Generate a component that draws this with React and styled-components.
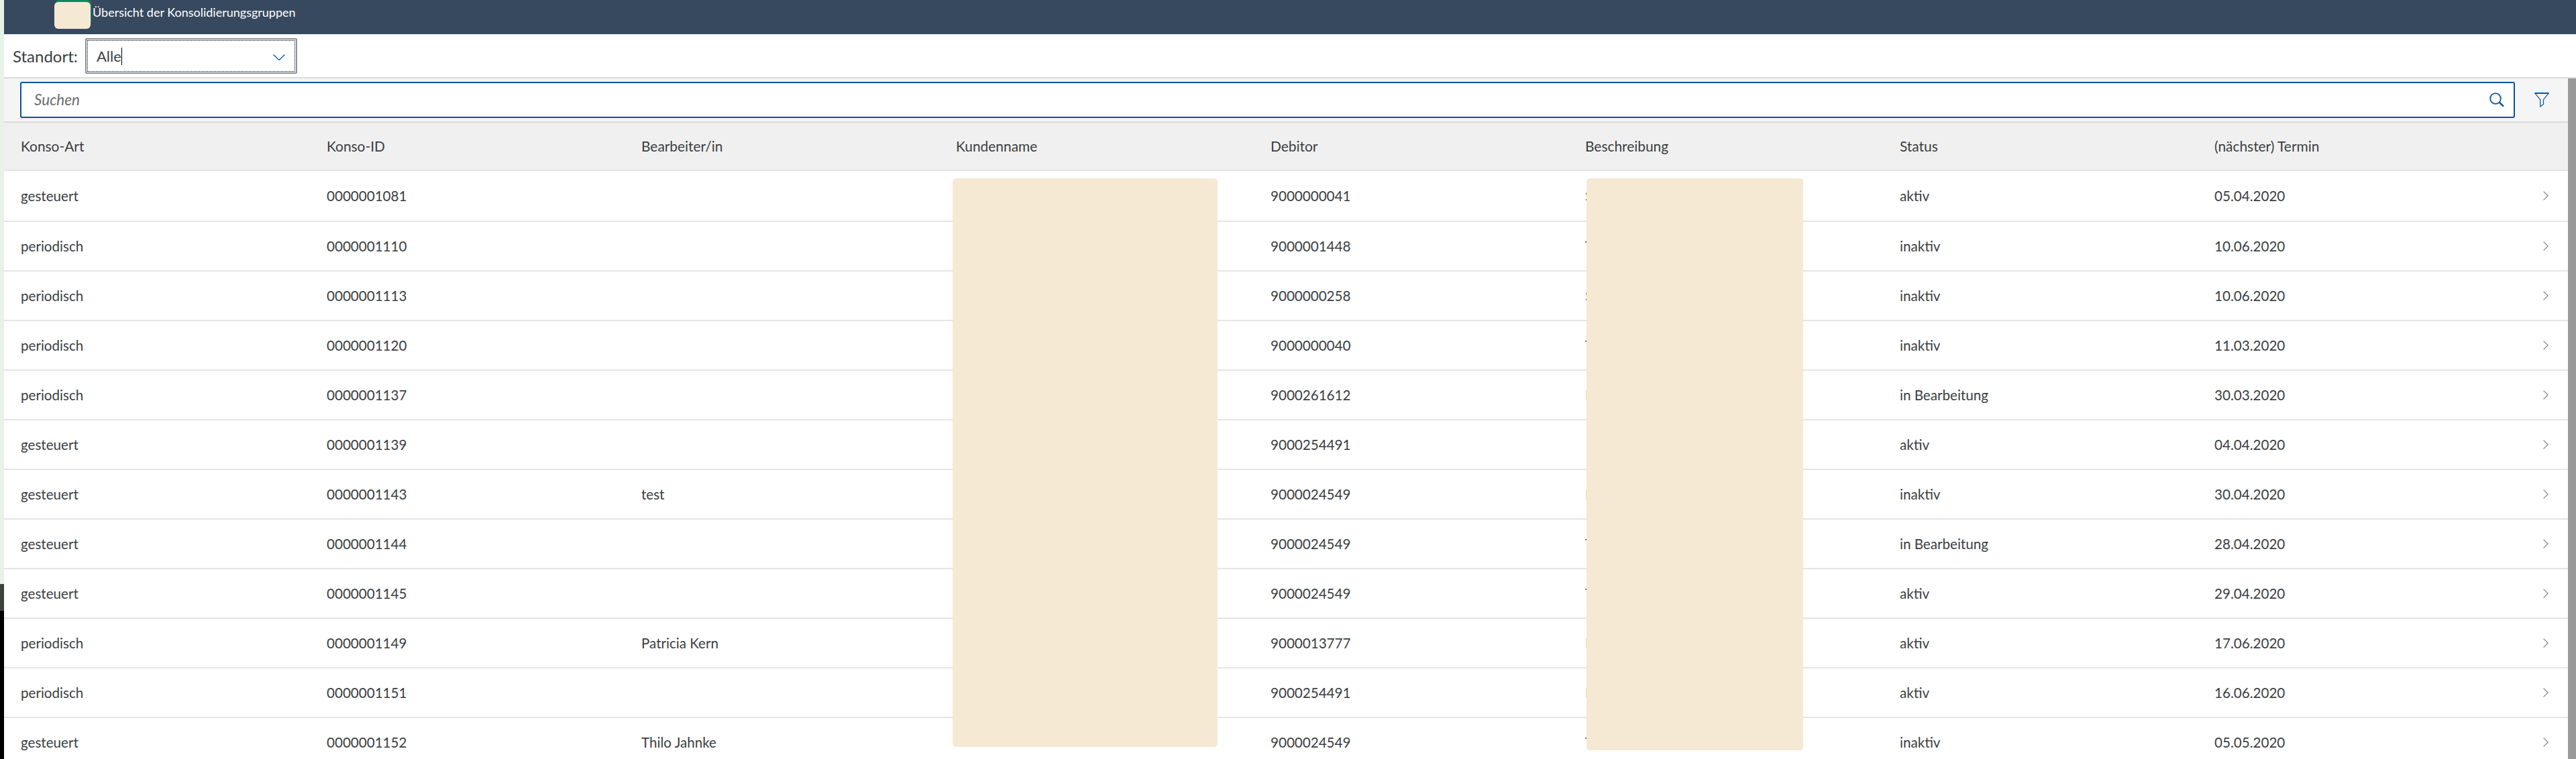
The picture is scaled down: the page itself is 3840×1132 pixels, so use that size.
import React from 'react';
import styled, { createGlobalStyle } from 'styled-components';

const ROWS = [
  ['gesteuert', '0000001081', '', '9000000041', 'S', 'aktiv', '05.04.2020'],
  ['periodisch', '0000001110', '', '9000001448', 'T', 'inaktiv', '10.06.2020'],
  ['periodisch', '0000001113', '', '9000000258', 'S', 'inaktiv', '10.06.2020'],
  ['periodisch', '0000001120', '', '9000000040', 'T', 'inaktiv', '11.03.2020'],
  ['periodisch', '0000001137', '', '9000261612', 'K', 'in Bearbeitung', '30.03.2020'],
  ['gesteuert', '0000001139', '', '9000254491', '', 'aktiv', '04.04.2020'],
  ['gesteuert', '0000001143', 'test', '9000024549', 'K', 'inaktiv', '30.04.2020'],
  ['gesteuert', '0000001144', '', '9000024549', 'T', 'in Bearbeitung', '28.04.2020'],
  ['gesteuert', '0000001145', '', '9000024549', 'T', 'aktiv', '29.04.2020'],
  ['periodisch', '0000001149', 'Patricia Kern', '9000013777', 'K', 'aktiv', '17.06.2020'],
  ['periodisch', '0000001151', '', '9000254491', 'K', 'aktiv', '16.06.2020'],
  ['gesteuert', '0000001152', 'Thilo Jahnke', '9000024549', 'T', 'inaktiv', '05.05.2020'],
];

const COLUMNS = ['Konso-Art', 'Konso-ID', 'Bearbeiter/in', 'Kundenname', 'Debitor', 'Beschreibung', 'Status', '(nächster) Termin'];

function App() {
  return (
    <Page>
      <GlobalStyle />
      <EdgeStrip>
        <EdgeGreen />
        <EdgeDark />
        <EdgeBlack />
      </EdgeStrip>
      <Main>
        <ShellBar>
          <Logo />
          <ShellTitle>Übersicht der Konsolidierungsgruppen</ShellTitle>
        </ShellBar>
        <Toolbar>
          <FieldLabel>Standort:</FieldLabel>
          <Select>
            <SelectValue>Alle</SelectValue>
            <Caret />
            <SelectArrow viewBox="0 0 18 9">
              <path d="M.5.5 9 8.5 17.5.5" />
            </SelectArrow>
          </Select>
        </Toolbar>
        <ScrollArea>
          <Content>
            <SearchBar>
              <SearchField>
                <Placeholder>Suchen</Placeholder>
                <SearchIcon viewBox="0 0 22 22">
                  <circle cx="9" cy="9" r="7.8" />
                  <path d="M14.8 14.8 21 20.6" strokeWidth="2.6" />
                </SearchIcon>
              </SearchField>
              <FilterIcon viewBox="0 0 22 22">
                <path d="M.7 1h20.6l-7.8 9.6v6.8L8.8 21V10.6z" />
                <path d="M.7 1h20.6" strokeWidth="2" />
              </FilterIcon>
            </SearchBar>
            <HeadRow>
              {COLUMNS.map(c => <HeadCell key={c}>{c}</HeadCell>)}
            </HeadRow>
            {ROWS.map(r => (
              <Row key={r[1]}>
                <Cell>{r[0]}</Cell>
                <Cell>{r[1]}</Cell>
                <Cell>{r[2]}</Cell>
                <Cell />
                <Cell>{r[3]}</Cell>
                <Cell>{r[4]}</Cell>
                <Cell>{r[5]}</Cell>
                <Cell>{r[6]}</Cell>
                <NavCell>
                  <Chevron viewBox="0 0 8 14">
                    <path d="M.6.6 7.2 7 .6 13.4" />
                  </Chevron>
                </NavCell>
              </Row>
            ))}
          </Content>
          <ScrollBar />
        </ScrollArea>
      </Main>
      <Redaction $left={1420} $top={266} $width={395} $height={848} />
      <Redaction $left={2365} $top={266} $width={323} $height={853} />
    </Page>
  );
}

const GlobalStyle = createGlobalStyle`
  html, body {
    margin: 0;
    height: 100%;
    overflow: hidden;
    background: #fff;
  }
`;

const Page = styled.div`
  position: relative;
  display: flex;
  width: 3840px;
  height: 1132px;
  overflow: hidden;
  font-family: Lato, "Noto Sans", sans-serif;
  color: #3a3e42;
`;

const EdgeStrip = styled.div`
  display: flex;
  flex-direction: column;
  flex: 0 0 6px;
`;

const EdgeGreen = styled.div`
  height: 871px;
  background: #e5f3e8;
`;

const EdgeDark = styled.div`
  height: 40px;
  background: linear-gradient(90deg, #23281f 0 1px, #6d7268 1px 2px, #23281f 2px 4px, #6d7268 4px 5px, #23281f 5px);
`;

const EdgeBlack = styled.div`
  flex: 1;
  background: #000;
`;

const Main = styled.div`
  display: flex;
  flex-direction: column;
  flex: 1;
  min-width: 0;
`;

const ShellBar = styled.div`
  display: flex;
  align-items: flex-start;
  height: 51px;
  padding-left: 75px;
  background: #36495f;
`;

const Logo = styled.div`
  width: 54px;
  height: 40px;
  margin-top: 3px;
  border-radius: 6px;
  background: #f5e9d3;
  box-shadow: 1px -3px 0 #0a8a5c;
`;

const ShellTitle = styled.div`
  margin: 6px 0 0 3px;
  font-size: 18px;
  line-height: 24px;
  color: #fff;
`;

const Toolbar = styled.div`
  display: flex;
  align-items: center;
  box-sizing: border-box;
  height: 66px;
  padding-left: 13px;
  border-bottom: 2px solid #dcdcdc;
`;

const FieldLabel = styled.div`
  width: 108px;
  font-size: 24px;
`;

const Select = styled.div`
  position: relative;
  display: flex;
  align-items: center;
  box-sizing: border-box;
  width: 316px;
  height: 53px;
  margin-top: 1px;
  padding: 0 16px 0 15px;
  border: 2px solid #89919a;
  border-radius: 2px;
  outline: 1px dotted #000;
  outline-offset: -4px;
`;

const SelectValue = styled.span`
  font-size: 22px;
`;

const Caret = styled.span`
  width: 1px;
  height: 26px;
  background: #000;
`;

const SelectArrow = styled.svg`
  width: 18px;
  height: 9px;
  margin-left: auto;
  margin-top: 3px;
  fill: none;
  stroke: #0a5ba5;
  stroke-width: 1.3;
`;

const ScrollArea = styled.div`
  display: flex;
  flex: 1;
  min-height: 0;
`;

const Content = styled.div`
  flex: 1;
  min-width: 0;
  background: #fff;
`;

const SearchBar = styled.div`
  display: flex;
  align-items: center;
  box-sizing: border-box;
  height: 66px;
  padding: 0 28px 0 24px;
  background: #f5f5f5;
  border-bottom: 2px solid #d9d9d9;
`;

const SearchField = styled.div`
  display: flex;
  align-items: center;
  justify-content: space-between;
  box-sizing: border-box;
  flex: 1;
  height: 54px;
  margin-top: -1px;
  padding: 0 14px 0 19px;
  background: #fff;
  border: 2px solid #0854a0;
  border-radius: 3px;
`;

const Placeholder = styled.span`
  font-size: 22.5px;
  font-style: italic;
  color: #6a6d70;
`;

const SearchIcon = styled.svg`
  width: 22px;
  height: 22px;
  fill: none;
  stroke: #0854a0;
  stroke-width: 1.8;
`;

const FilterIcon = styled.svg`
  width: 22px;
  height: 22px;
  margin-left: 29px;
  fill: none;
  stroke: #0854a0;
  stroke-width: 1.2;
`;

const HeadRow = styled.div`
  display: grid;
  grid-template-columns: 456px repeat(7, 469px);
  box-sizing: border-box;
  align-items: center;
  height: 72px;
  padding: 0 0 2px 25px;
  background: #f0f0f0;
  border-bottom: 2px solid #e5e5e5;
`;

const HeadCell = styled.div`
  font-size: 20.9px;
`;

const Row = styled.div`
  display: grid;
  grid-template-columns: 456px repeat(7, 469px) 1fr;
  align-items: center;
  box-sizing: border-box;
  height: 74px;
  padding-left: 25px;
  & + & {
    border-top: 2px solid #e5e5e5;
  }
`;

const Cell = styled.div`
  font-size: 20.6px;
  white-space: nowrap;
`;

const NavCell = styled.div`
  display: flex;
  padding-left: 21px;
`;

const Chevron = styled.svg`
  width: 8px;
  height: 14px;
  fill: none;
  stroke: #7a7d80;
  stroke-width: 1.2;
`;

const ScrollBar = styled.div`
  flex: 0 0 12px;
  background: #999;
`;

const Redaction = styled.div`
  position: absolute;
  left: ${p => p.$left}px;
  top: ${p => p.$top}px;
  width: ${p => p.$width}px;
  height: ${p => p.$height}px;
  border-radius: 5px;
  background: #f5e9d3;
`;

export default App;
